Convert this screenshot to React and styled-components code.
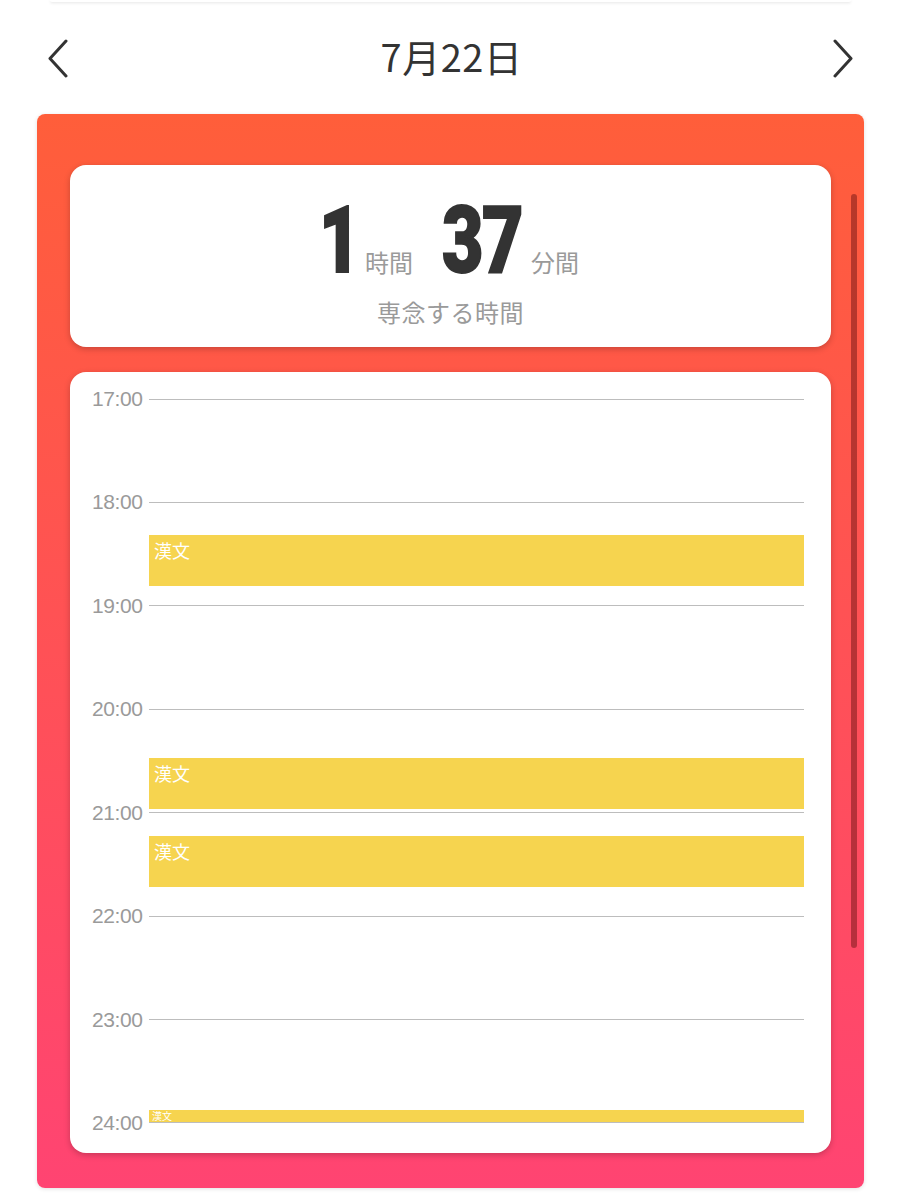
import React from 'react';
import styled, { createGlobalStyle } from 'styled-components';

const GlobalStyle = createGlobalStyle`
    body {
        margin: 0;
        background: #fff;
        font-family: "Liberation Sans", "Noto Sans CJK JP", sans-serif;
    }
`;

const HOUR_PX = 103.43;
const ROW_H = 20;

const sessions = [
    { start: 79, end: 108.5, label: '漢文' },
    { start: 208, end: 238, label: '漢文' },
    { start: 253.5, end: 283, label: '漢文' },
    { start: 412.5, end: 419.5, label: '漢文', small: true },
];

const hours = ['17:00', '18:00', '19:00', '20:00', '21:00', '22:00', '23:00', '24:00'];

const Page = styled.div`
    width: 901px;
    height: 1200px;
    overflow: hidden;
`;

const PrevCardEdge = styled.div`
    height: 2px;
    margin: 0 50px;
    background: #fff;
    border-radius: 0 0 6px 6px;
    box-shadow: 0 1px 3px rgba(0, 0, 0, 0.12);
`;

const Header = styled.div`
    height: 112px;
    display: flex;
    align-items: center;
    justify-content: space-between;
    padding: 0 46px;
`;

const NavButton = styled.button`
    border: 0;
    background: none;
    padding: 0;
    width: 24px;
    height: 40px;
    display: flex;
    align-items: center;
    justify-content: center;
    margin-top: 2px;
`;

const DateTitle = styled.div`
    font-family: "Noto Sans CJK JP", sans-serif;
    font-size: 38px;
    color: #333;
    letter-spacing: 0.5px;
    margin-top: -6px;
    margin-left: 2px;
`;

const Panel = styled.div`
    position: relative;
    margin: 0 37px;
    height: 1074px;
    box-sizing: border-box;
    padding: 51px 33px 0;
    border-radius: 8px;
    background: linear-gradient(180deg, #ff5e3a 0%, #ff4472 100%);
    box-shadow: 0 1px 4px rgba(0, 0, 0, 0.12);
    display: flex;
    flex-direction: column;
    gap: 25px;
`;

const ScrollThumb = styled.div`
    position: absolute;
    right: 7px;
    top: 80px;
    width: 6px;
    height: 754px;
    border-radius: 3px;
    background: rgba(110, 20, 20, 0.5);
`;

const Card = styled.div`
    background: #fff;
    border-radius: 16px;
    box-shadow: 0 2px 6px rgba(0, 0, 0, 0.22);
    height: ${props => props.h}px;
    box-sizing: border-box;
`;

const StatCard = styled(Card)`
    display: flex;
    flex-direction: column;
    align-items: center;
    padding-top: 33px;
`;

const Duration = styled.div`
    display: flex;
    align-items: baseline;
    height: 86px;
    margin-left: -3px;
`;

const BigNum = styled.span`
    display: inline-block;
    width: ${props => props.w}px;
    white-space: nowrap;
    font-family: Roboto, "Liberation Sans", sans-serif;
    font-weight: 900;
    font-size: 93px;
    line-height: 86px;
    color: #333;
    -webkit-text-stroke: 2px #333;
    letter-spacing: -2px;
    transform: scaleX(0.77);
    transform-origin: left center;
`;

const Unit = styled.span`
    font-family: "Noto Sans CJK JP", sans-serif;
    font-size: 24px;
    color: #9a9a9a;
    margin-right: ${props => props.mr || 0}px;
`;

const Caption = styled.div`
    font-family: "Noto Sans CJK JP", sans-serif;
    font-size: 24px;
    color: #9a9a9a;
    margin-top: 10px;
    letter-spacing: 0.5px;
`;

const TimelineCard = styled(Card)`
    padding: 17px 27px 0 22px;
`;

const Track = styled.div`
    position: relative;
    display: flex;
    flex-direction: column;
    gap: ${HOUR_PX - ROW_H}px;
`;

const HourRow = styled.div`
    display: flex;
    align-items: center;
    height: ${ROW_H}px;
`;

const HourLabel = styled.span`
    width: 57px;
    font-size: 21px;
    color: #9a9a9a;
    letter-spacing: -0.4px;
`;

const HourLine = styled.div`
    flex: 1;
    height: 1px;
    background: #bdbdbd;
`;

const Session = styled.div`
    position: absolute;
    left: 57px;
    right: 0;
    background: #f6d44f;
    color: #fff;
    font-family: "Noto Sans CJK JP", sans-serif;
    font-size: ${props => (props.small ? 10 : 18)}px;
    line-height: ${props => (props.small ? 10 : 18)}px;
    padding: ${props => (props.small ? '1px 3px' : '6px 5px')};
    box-sizing: border-box;
`;

const Chevron = ({ dir }) => (
    <svg width="22" height="40" viewBox="0 0 22 40" fill="none">
        <path
            d={dir === 'left' ? 'M19 2 L3 19.5 L19 37' : 'M3 2 L19 19.5 L3 37'}
            stroke="#333"
            strokeWidth="3"
            strokeLinecap="round"
            strokeLinejoin="round"
        />
    </svg>
);

const App = () => {
    const perMin = HOUR_PX / 60;

    return (
        <Page>
            <GlobalStyle />
            <PrevCardEdge />
            <Header>
                <NavButton><Chevron dir="left" /></NavButton>
                <DateTitle>7月22日</DateTitle>
                <NavButton><Chevron dir="right" /></NavButton>
            </Header>
            <Panel>
                <ScrollThumb />
                <StatCard h={182}>
                    <Duration>
                        <BigNum w={46}>1</BigNum>
                        <Unit mr={29}>時間</Unit>
                        <BigNum w={89}>37</BigNum>
                        <Unit>分間</Unit>
                    </Duration>
                    <Caption>専念する時間</Caption>
                </StatCard>
                <TimelineCard h={781}>
                    <Track>
                        {hours.map(h => (
                            <HourRow key={h}>
                                <HourLabel>{h}</HourLabel>
                                <HourLine />
                            </HourRow>
                        ))}
                        {sessions.map((s, i) => (
                            <Session
                                key={i}
                                small={s.small}
                                style={{
                                    top: ROW_H / 2 + s.start * perMin,
                                    height: (s.end - s.start) * perMin,
                                }}
                            >
                                {s.label}
                            </Session>
                        ))}
                    </Track>
                </TimelineCard>
            </Panel>
        </Page>
    );
};

export default App;
